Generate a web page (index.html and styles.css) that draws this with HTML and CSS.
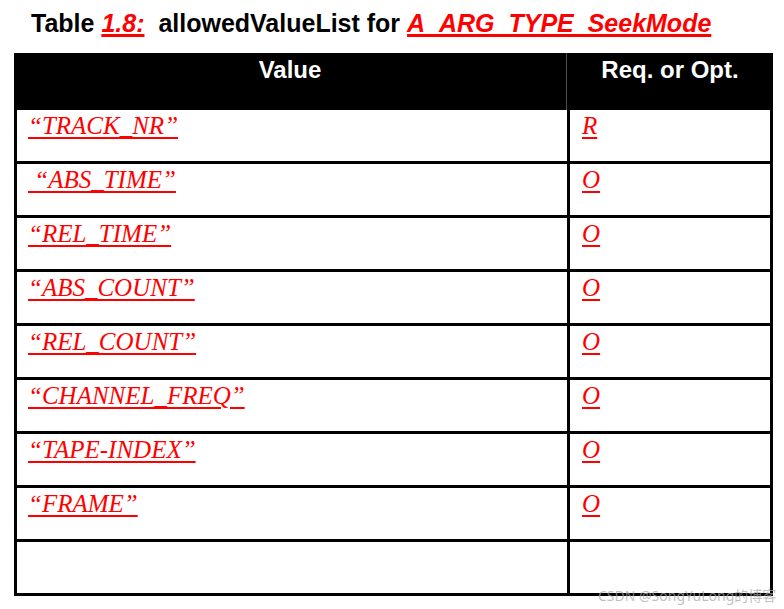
FILE: index.html
```html
<!DOCTYPE html>
<html>
<head>
<meta charset="utf-8">
<link rel="stylesheet" href="styles.css">
</head>
<body>
<div class="page">
  <h1 class="title">Table <span class="ref">1.8:</span>&nbsp; allowedValueList for <span class="ref">A_ARG_TYPE_SeekMode</span></h1>
  <div class="table">
    <div class="head">
      <div class="hcell hcell-value">Value</div>
      <div class="hcell">Req. or Opt.</div>
    </div>
    <div class="row"><div class="cell"><span class="link">“TRACK_NR”</span></div><div class="cell cell-req"><span class="link">R</span></div></div>
    <div class="row"><div class="cell"><span class="link">&nbsp;“ABS_TIME”</span></div><div class="cell cell-req"><span class="link">O</span></div></div>
    <div class="row"><div class="cell"><span class="link">“REL_TIME”</span></div><div class="cell cell-req"><span class="link">O</span></div></div>
    <div class="row"><div class="cell"><span class="link">“ABS_COUNT”</span></div><div class="cell cell-req"><span class="link">O</span></div></div>
    <div class="row"><div class="cell"><span class="link">“REL_COUNT”</span></div><div class="cell cell-req"><span class="link">O</span></div></div>
    <div class="row"><div class="cell"><span class="link">“CHANNEL_FREQ”</span></div><div class="cell cell-req"><span class="link">O</span></div></div>
    <div class="row"><div class="cell"><span class="link">“TAPE-INDEX”</span></div><div class="cell cell-req"><span class="link">O</span></div></div>
    <div class="row"><div class="cell"><span class="link">“FRAME”</span></div><div class="cell cell-req"><span class="link">O</span></div></div>
    <div class="row"><div class="cell"></div><div class="cell cell-req"></div></div>
  </div>
  <div class="watermark">CSDN @SongYuLong的博客</div>
</div>
</body>
</html>
```

FILE: styles.css
```css
html, body {
  margin: 0;
  padding: 0;
  background: #fff;
}

.page {
  position: relative;
  width: 784px;
  height: 609px;
  overflow: hidden;
}

.title {
  margin: 0;
  padding: 8px 0 0 31px;
  height: 53px;
  box-sizing: border-box;
  font-family: "Liberation Sans", Arial, sans-serif;
  font-weight: bold;
  font-size: 25px;
  line-height: 30px;
  color: #000;
  white-space: nowrap;
}

.ref {
  color: #ff0000;
  font-style: italic;
  text-decoration: underline;
  text-decoration-thickness: 3px;
  text-underline-offset: 2px;
}

.table {
  margin-left: 14px;
  width: 759px;
  box-sizing: border-box;
}

.head {
  display: grid;
  grid-template-columns: 553px 1fr;
  height: 57px;
  background: #000;
}

.hcell {
  color: #fff;
  font-family: "Liberation Sans", Arial, sans-serif;
  font-weight: bold;
  font-size: 24px;
  line-height: 28px;
  padding-top: 3px;
  text-align: center;
}

.hcell-value {
  border-right: 1px solid #4d4d4d;
}

.row {
  display: grid;
  grid-template-columns: 553px 1fr;
  height: 54px;
  box-sizing: border-box;
  border-left: 3px solid #000;
  border-right: 3px solid #000;
  border-bottom: 3px solid #000;
}

.cell {
  padding: 1px 0 0 11px;
  font-family: "Liberation Serif", "Times New Roman", serif;
  font-style: italic;
  font-size: 25px;
  line-height: 30px;
  color: #ff0000;
  white-space: pre;
}

.row .cell:first-child {
  border-right: 3px solid #000;
}

.cell-req {
  padding-left: 12px;
}

.link {
  text-decoration: underline;
  text-decoration-thickness: 2px;
  text-underline-offset: 3px;
}

.watermark {
  position: absolute;
  left: 598px;
  top: 587px;
  font-family: "Noto Sans", "Noto Sans CJK SC", sans-serif;
  font-size: 14px;
  line-height: 18px;
  color: rgba(170, 170, 170, 0.75);
  white-space: nowrap;
}
```
